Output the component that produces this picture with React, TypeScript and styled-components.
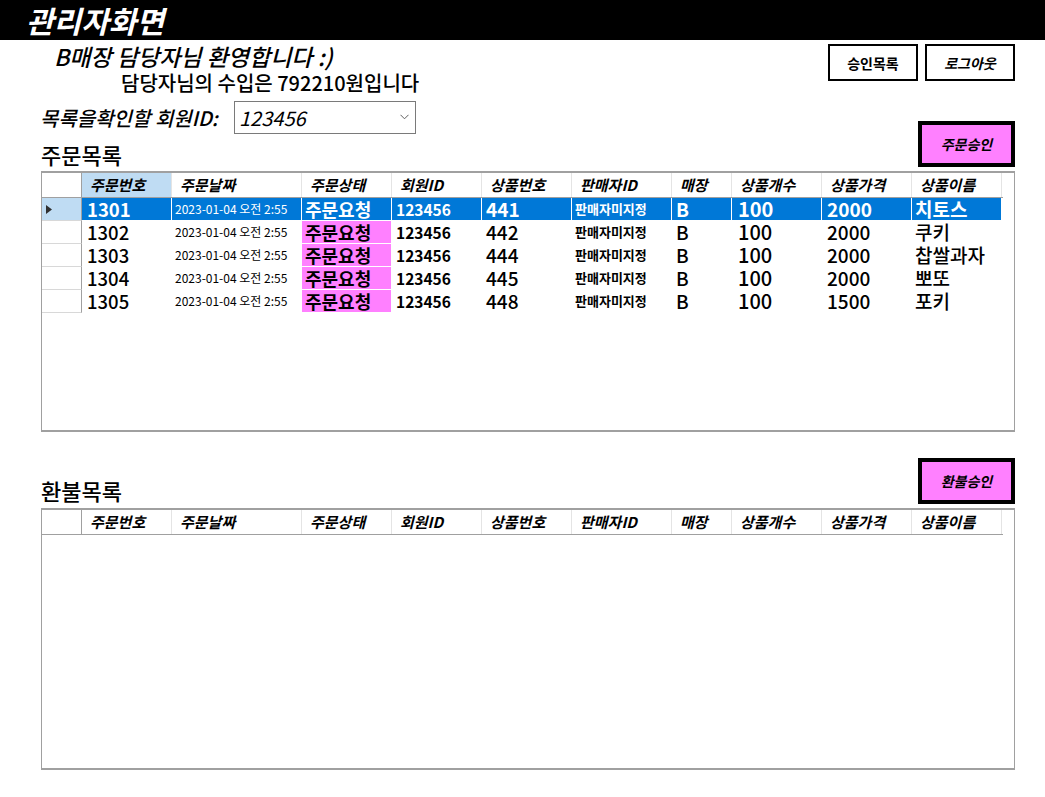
import React from "react";
import styled, { createGlobalStyle, css } from "styled-components";

const GlobalStyle = createGlobalStyle`
  html, body { margin: 0; padding: 0; background: #ffffff; }
  body { font-family: "Noto Sans CJK KR", "Noto Sans", sans-serif; color: #000; }
  * { box-sizing: border-box; }
`;

const FONT = `"Noto Sans CJK KR", "Noto Sans", sans-serif`;

type Kind = "id" | "date" | "status" | "member" | "product" | "seller" | "store" | "qty" | "price" | "name";

interface Column {
  key: string;
  title: string;
  width: number;
  kind: Kind;
}

const columns: Column[] = [
  { key: "id", title: "주문번호", width: 90, kind: "id" },
  { key: "date", title: "주문날짜", width: 130, kind: "date" },
  { key: "status", title: "주문상태", width: 90, kind: "status" },
  { key: "member", title: "회원ID", width: 90, kind: "member" },
  { key: "product", title: "상품번호", width: 90, kind: "product" },
  { key: "seller", title: "판매자ID", width: 100, kind: "seller" },
  { key: "store", title: "매장", width: 60, kind: "store" },
  { key: "qty", title: "상품개수", width: 90, kind: "qty" },
  { key: "price", title: "상품가격", width: 90, kind: "price" },
  { key: "name", title: "상품이름", width: 90, kind: "name" },
];

const gridTemplate = `40px ${columns.map((c) => `${c.width}px`).join(" ")}`;

const orders: Record<string, string>[] = [
  { id: "1301", date: "2023-01-04 오전 2:55", status: "주문요청", member: "123456", product: "441", seller: "판매자미지정", store: "B", qty: "100", price: "2000", name: "치토스" },
  { id: "1302", date: "2023-01-04 오전 2:55", status: "주문요청", member: "123456", product: "442", seller: "판매자미지정", store: "B", qty: "100", price: "2000", name: "쿠키" },
  { id: "1303", date: "2023-01-04 오전 2:55", status: "주문요청", member: "123456", product: "444", seller: "판매자미지정", store: "B", qty: "100", price: "2000", name: "찹쌀과자" },
  { id: "1304", date: "2023-01-04 오전 2:55", status: "주문요청", member: "123456", product: "445", seller: "판매자미지정", store: "B", qty: "100", price: "2000", name: "뽀또" },
  { id: "1305", date: "2023-01-04 오전 2:55", status: "주문요청", member: "123456", product: "448", seller: "판매자미지정", store: "B", qty: "100", price: "1500", name: "포키" },
];

const Page = styled.div`
  width: 1045px;
  min-height: 797px;
  background: #ffffff;
`;

const TitleBar = styled.header`
  height: 40px;
  background: #000000;
  color: #ffffff;
  padding-left: 26px;
  font-family: ${FONT};
  font-size: 30px;
  font-weight: 700;
  font-style: italic;
  line-height: 40px;
  white-space: nowrap;
`;

const Content = styled.main`
  padding: 0 30px 0 41px;
`;

const TopArea = styled.section`
  height: 131px;
  display: flex;
  justify-content: space-between;
`;

const LeftCol = styled.div`
  display: flex;
  flex-direction: column;
`;

const Welcome = styled.div`
  margin-top: 2px;
  height: 28px;
  line-height: 28px;
  padding-left: 13px;
  font-size: 23px;
  font-style: italic;
  font-weight: 500;
  white-space: nowrap;
`;

const Income = styled.div`
  height: 26px;
  line-height: 26px;
  padding-left: 80px;
  font-size: 20px;
  font-weight: 500;
  white-space: nowrap;
`;

const IdRow = styled.div`
  margin-top: 4px;
  height: 34px;
  display: flex;
  align-items: center;
`;

const IdLabel = styled.span`
  width: 194px;
  margin-left: -1px;
  font-size: 20px;
  font-style: italic;
  font-weight: 500;
  white-space: nowrap;
`;

const Combo = styled.div`
  width: 182px;
  height: 33px;
  border: 1px solid #7a7a7a;
  background: #ffffff;
  display: flex;
  align-items: center;
  justify-content: space-between;
  padding: 0 6px 0 4px;
  font-size: 20px;
  font-style: italic;
`;

const SectionTitle = styled.div`
  height: 28px;
  line-height: 28px;
  font-size: 22px;
  font-weight: 500;
  white-space: nowrap;
`;

const FirstTitle = styled(SectionTitle)`
  margin-top: 6px;
`;

const RightCol = styled.div`
  display: flex;
  flex-direction: column;
  justify-content: space-between;
  align-items: flex-end;
  padding: 4px 0 4px;
`;

const ButtonRow = styled.div`
  display: flex;
  gap: 7px;
`;

const OutlineButton = styled.button<{ $italic?: boolean }>`
  width: 90px;
  height: 37px;
  border: 2px solid #000000;
  background: #ffffff;
  font-family: ${FONT};
  font-size: 14px;
  font-weight: 700;
  font-style: ${(p) => (p.$italic ? "italic" : "normal")};
  padding: 0;
  color: #000;
`;

const ApproveButton = styled.button`
  width: 97px;
  height: 46px;
  border: 4px solid #000000;
  background: #ff80ff;
  font-family: ${FONT};
  font-size: 14px;
  font-weight: 700;
  font-style: italic;
  padding: 0;
  color: #000;
`;

const SectionHeader = styled.div`
  margin-top: 26px;
  margin-bottom: 4px;
  display: flex;
  justify-content: space-between;
  align-items: flex-end;
`;

const GridFrame = styled.div<{ $height: number }>`
  height: ${(p) => p.$height}px;
  border: 1px solid #a0a0a0;
  border-top-width: 2px;
  border-bottom-width: 2px;
  background: #ffffff;
  overflow: hidden;
`;

const HeaderRow = styled.div`
  display: grid;
  grid-template-columns: ${gridTemplate};
  width: 961px;
  height: 25px;
  border-bottom: 1px solid #a0a0a0;
`;

const CornerCell = styled.div`
  border-right: 1px solid #a0a0a0;
`;

const HeaderCell = styled.div<{ $active?: boolean }>`
  background: ${(p) => (p.$active ? "#bfdcf3" : "#ffffff")};
  border-right: 1px solid #e4e4e4;
  padding-left: 8px;
  font-size: 15px;
  font-weight: 700;
  font-style: italic;
  line-height: 24px;
  white-space: nowrap;
`;

const DataRow = styled.div`
  display: grid;
  grid-template-columns: ${gridTemplate};
  width: 961px;
  height: 23px;
`;

const RowHeader = styled.div<{ $selected?: boolean }>`
  background: ${(p) => (p.$selected ? "#bfdcf3" : "#ffffff")};
  border-right: 1px solid #a0a0a0;
  border-bottom: 1px solid #d8d8d8;
  display: flex;
  align-items: center;
  padding-left: 4px;
`;

const kindStyles: Record<Kind, ReturnType<typeof css>> = {
  id: css`font-size: 18.5px; font-weight: 500; padding-left: 5px;`,
  date: css`font-size: 12px; font-weight: 400; padding-left: 3px;`,
  status: css`font-size: 18px; font-weight: 700; padding-left: 3px;`,
  member: css`font-size: 15.5px; font-weight: 700; padding-left: 4px;`,
  product: css`font-size: 19px; font-weight: 500; padding-left: 4px;`,
  seller: css`font-size: 13px; font-weight: 700; padding-left: 3px;`,
  store: css`font-size: 19px; font-weight: 500; padding-left: 4px;`,
  qty: css`font-size: 20px; font-weight: 500; padding-left: 6px;`,
  price: css`font-size: 19px; font-weight: 500; padding-left: 5px;`,
  name: css`font-size: 19px; font-weight: 500; padding-left: 3px;`,
};

const Cell = styled.div<{ $kind: Kind; $selected?: boolean }>`
  border-right: 1px solid #ffffff;
  border-bottom: 1px solid #ffffff;
  line-height: 22px;
  white-space: nowrap;
  color: ${(p) => (p.$selected ? "#ffffff" : "#000000")};
  background: ${(p) =>
    p.$selected ? "#0078d7" : p.$kind === "status" ? "#ff80ff" : "#ffffff"};
  ${(p) => kindStyles[p.$kind]}
  ${(p) => p.$selected && p.$kind !== "date" && css`font-weight: 700;`}
`;

const Chevron = () => (
  <svg width="9" height="6" viewBox="0 0 9 6" aria-hidden="true">
    <polyline points="0.5,0.8 4.5,4.8 8.5,0.8" fill="none" stroke="#606060" strokeWidth="1" />
  </svg>
);

const RowArrow = () => (
  <svg width="6" height="9" viewBox="0 0 6 9" aria-hidden="true">
    <polygon points="0,0 6,4.5 0,9" fill="#303030" />
  </svg>
);

interface GridProps {
  rows: Record<string, string>[];
  height: number;
  selectedIndex?: number;
  activeColumn?: string;
}

const DataGrid = ({ rows, height, selectedIndex, activeColumn }: GridProps) => (
  <GridFrame $height={height}>
    <HeaderRow>
      <CornerCell />
      {columns.map((c) => (
        <HeaderCell key={c.key} $active={c.key === activeColumn}>
          {c.title}
        </HeaderCell>
      ))}
    </HeaderRow>
    {rows.map((r, i) => {
      const sel = i === selectedIndex;
      return (
        <DataRow key={r.id}>
          <RowHeader $selected={sel}>{sel && <RowArrow />}</RowHeader>
          {columns.map((c) => (
            <Cell key={c.key} $kind={c.kind} $selected={sel}>
              {r[c.key]}
            </Cell>
          ))}
        </DataRow>
      );
    })}
  </GridFrame>
);

export default function App() {
  return (
    <Page>
      <GlobalStyle />
      <TitleBar>관리자화면</TitleBar>
      <Content>
        <TopArea>
          <LeftCol>
            <Welcome>B매장 담당자님 환영합니다 :)</Welcome>
            <Income>담당자님의 수입은 792210원입니다</Income>
            <IdRow>
              <IdLabel>목록을확인할 회원ID:</IdLabel>
              <Combo>
                <span>123456</span>
                <Chevron />
              </Combo>
            </IdRow>
            <FirstTitle>주문목록</FirstTitle>
          </LeftCol>
          <RightCol>
            <ButtonRow>
              <OutlineButton>승인목록</OutlineButton>
              <OutlineButton $italic>로그아웃</OutlineButton>
            </ButtonRow>
            <ApproveButton>주문승인</ApproveButton>
          </RightCol>
        </TopArea>
        <DataGrid rows={orders} height={261} selectedIndex={0} activeColumn="id" />
        <SectionHeader>
          <SectionTitle>환불목록</SectionTitle>
          <ApproveButton>환불승인</ApproveButton>
        </SectionHeader>
        <DataGrid rows={[]} height={262} />
      </Content>
    </Page>
  );
}
